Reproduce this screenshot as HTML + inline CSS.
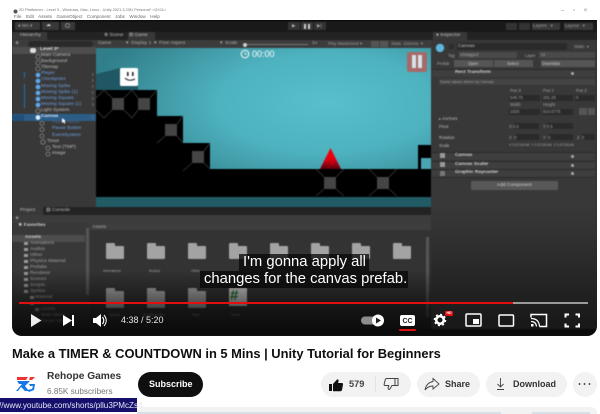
<!DOCTYPE html>
<html><head><meta charset="utf-8"><style>
html,body{margin:0;padding:0;background:#fff}
body{width:600px;height:414px;position:relative;overflow:hidden;font-family:"Liberation Sans",sans-serif}
.a,.t{position:absolute}
.t{white-space:nowrap;line-height:1}
#v{position:absolute;left:12px;top:20px;width:585px;height:316px;background:#282828;overflow:hidden;border-radius:0 0 10px 10px}
#v .u{filter:blur(.45px)}
.h{font-size:4.9px;color:#bdbdbd}
.b{color:#6f9fe0}
.i{font-size:4.2px;color:#a0a0a0}
.s{font-size:4.9px;color:#a0a0a0}
.n{font-size:4.9px;color:#ccc;font-weight:bold}
.f{position:absolute;width:18px;height:13px;background:#a3a3a3;border-radius:1px}
.f:before{content:"";position:absolute;left:0;top:-3px;width:9px;height:4px;background:#a3a3a3;border-radius:1px 1px 0 0}
.fd{position:absolute;width:4px;height:3px;background:#9a9a9a}
.box{position:absolute;background:#2a2a2a;height:6px}
.pill{position:absolute;background:#f2f2f2;border-radius:13px;height:25px;top:372px}
.cap{position:absolute;background:rgba(8,8,8,.76);color:#fff;font-size:14.8px;white-space:nowrap;box-sizing:border-box;padding-left:4px}
.btn{position:absolute;font-size:9px;font-weight:bold;color:#333;white-space:nowrap;line-height:1}
</style></head><body>

<div class="t" style="left:19px;top:8px;font-size:3.9px;color:#777">2D Platformer - Level 3 - Windows, Mac, Linux - Unity 2021.3.23f1 Personal* &lt;DX11&gt;</div>
<div class="t" style="left:14px;top:15px;font-size:4.6px;color:#666;word-spacing:1px">File&nbsp; Edit&nbsp; Assets&nbsp; GameObject&nbsp; Component&nbsp; Jobs&nbsp; Window&nbsp; Help</div>
<svg class="a" style="left:12px;top:9px" width="7" height="6"><circle cx="3.500" cy="2.500" r="2" fill="#555"/></svg>
<div class="t" style="left:561px;top:8px;font-size:6px;color:#888;word-spacing:7px">– ▫ ×</div>

<div id="v"><div class="u">
<!-- toolbar -->
<div class="a" style="left:0;top:0;width:585px;height:12px;background:#191919;border-top:1px solid #000;box-sizing:border-box"></div>
<div class="a" style="left:3px;top:2px;width:25px;height:8px;background:#383838;border-radius:1px"></div>
<div class="t" style="left:6px;top:4px;font-size:4.600px;color:#aaa">● MA ▾</div>
<div class="a" style="left:30px;top:2px;width:17px;height:8px;background:#383838"></div>
<div class="t" style="left:34px;top:3px;font-size:5px;color:#ddd">☁</div>
<div class="a" style="left:49px;top:2px;width:14px;height:8px;background:#383838"></div>
<div class="a" style="left:53px;top:3px;width:5px;height:5px;border:1px solid #888;border-radius:50%;box-sizing:border-box"></div>
<div class="a" style="left:276px;top:2px;width:12px;height:8px;background:#333"></div>
<div class="a" style="left:289px;top:2px;width:12px;height:8px;background:#383838"></div>
<div class="a" style="left:302px;top:2px;width:12px;height:8px;background:#333"></div>
<div class="t" style="left:280px;top:4px;font-size:4.500px;color:#bbb">▶</div>
<div class="a" style="left:292px;top:4px;width:2px;height:5px;background:#ccc"></div><div class="a" style="left:296px;top:4px;width:2px;height:5px;background:#ccc"></div>
<div class="t" style="left:305px;top:4px;font-size:4.500px;color:#aaa">▶|</div>
<div class="a" style="left:494px;top:3px;width:11px;height:7px;background:#333"></div>
<div class="a" style="left:507px;top:3px;width:11px;height:7px;background:#333"></div>
<div class="a" style="left:520px;top:3px;width:28px;height:7px;background:#383838"></div>
<div class="t" style="left:521px;top:4px;font-size:4.600px;color:#999">Layers&nbsp;&nbsp;&nbsp;▾</div>
<div class="a" style="left:552px;top:3px;width:29px;height:7px;background:#383838"></div>
<div class="t" style="left:553px;top:4px;font-size:4.600px;color:#999">Layout&nbsp;&nbsp;&nbsp;▾</div>

<!-- hierarchy -->
<div class="a" style="left:0;top:12px;width:84px;height:175px;background:#383838"></div>
<div class="a" style="left:0;top:12px;width:84px;height:8px;background:#232323"></div>
<div class="a" style="left:0;top:12px;width:35px;height:8px;background:#383838"></div>
<div class="t h" style="left:8px;top:14px">Hierarchy</div>
<div class="a" style="left:0;top:20px;width:84px;height:8px;background:#3c3c3c"></div>
<div class="t" style="left:3px;top:20px;font-size:7px;color:#ccc">+</div>
<div class="a" style="left:16px;top:21px;width:65px;height:6px;background:#2a2a2a;border-radius:3px"></div>
<div class="a" style="left:0;top:27px;width:84px;height:7px;background:#4d4d4d"></div>
<div class="t h" style="left:28px;top:28px;font-weight:bold;color:#ddd">Level 3*</div>
<div class="a" style="left:18px;top:28px;width:6px;height:5px;background:#ddd;border-radius:2px"></div>
<div class="t h" style="left:29px;top:34px">Main Camera</div>
<div class="t h" style="left:29px;top:40px">Background</div>
<div class="t h" style="left:29px;top:46px">Tilemap</div>
<div class="t h b" style="left:29px;top:52px">Player</div>
<div class="t h b" style="left:29px;top:58px">Checkpoint</div>
<div class="t h b" style="left:29px;top:64.500px">Moving Spike</div>
<div class="t h b" style="left:29px;top:70.500px">Moving Spike (1)</div>
<div class="t h b" style="left:29px;top:76.500px">Moving Square</div>
<div class="t h b" style="left:29px;top:82.500px">Moving Square (1)</div>
<div class="t h" style="left:29px;top:88.500px">Light System</div>
<div class="a" style="left:0;top:94px;width:84px;height:7px;background:#2c5d87"></div>
<div class="t h" style="left:29px;top:95px;color:#cfe0f5;font-weight:bold">Canvas</div>
<div class="t h" style="left:40px;top:101px;color:#4e6a93">Pause Menu</div>
<div class="t h b" style="left:40px;top:107px">Pause Button</div>
<div class="t h b" style="left:40px;top:113.500px">EventSystem</div>
<div class="t h" style="left:35px;top:119.500px">Timer</div>
<div class="t h" style="left:40px;top:125.500px">Text (TMP)</div>
<div class="t h" style="left:40px;top:131.500px">Image</div>
<svg class="a" style="left:0;top:28px" width="84" height="112">
<g fill="none" stroke="#8a8a8a" stroke-width=".8"><circle cx="26" cy="8.700" r="2.200"/><circle cx="26" cy="14.700" r="2.200"/><circle cx="26" cy="20.700" r="2.200"/><circle cx="26" cy="63" r="2.200"/><circle cx="30" cy="75.500" r="2"/><circle cx="30" cy="81.500" r="2"/><circle cx="30" cy="88" r="2"/><circle cx="31" cy="94" r="2.200"/><circle cx="36" cy="100" r="2"/><circle cx="36" cy="106" r="2"/></g>
<g fill="#5da6e8"><circle cx="26" cy="27" r="2.400"/><circle cx="26" cy="33" r="2.400"/><circle cx="26" cy="39" r="2.400"/><circle cx="26" cy="45" r="2.400"/><circle cx="26" cy="51" r="2.400"/><circle cx="26" cy="57" r="2.400"/><circle cx="26" cy="69.500" r="2.400" fill="#d7ecff"/></g>
<g fill="#1f73b5"><rect x="12" y="24" width="1" height="6"/><rect x="12" y="36" width="1" height="6"/><rect x="12" y="42" width="1" height="6"/><rect x="12" y="48" width="1" height="6"/><rect x="12" y="54" width="1" height="6"/></g>
<g fill="none" stroke="#777" stroke-width=".6"><path d="M80 25l1.500 1.500-1.500 1.500M80 31l1.500 1.500-1.500 1.500M80 37l1.500 1.500-1.500 1.500M80 43l1.500 1.500-1.500 1.500M80 49l1.500 1.500-1.500 1.500M80 55l1.500 1.500-1.500 1.500M80 68l1.500 1.500-1.500 1.500"/></g></svg>
<div class="a" style="left:1px;top:95px;width:11px;height:6px;background:#1f4f7a"></div>
<svg class="a" style="left:49px;top:97px" width="6" height="8"><path d="M1 1v5l1.400-1.200 1 2 1-.5-1-2H5z" fill="#fff"/></svg>

<!-- scene tabs -->
<div class="a" style="left:84px;top:12px;width:335px;height:8px;background:#232323"></div>
<div class="a" style="left:116px;top:12px;width:27px;height:8px;background:#383838"></div>
<div class="t h" style="left:92px;top:14px">⊕ Scene</div>
<div class="t h" style="left:117px;top:14px">⊞ Game</div>
<div class="a" style="left:84px;top:20px;width:335px;height:8px;background:#3c3c3c"></div>
<div class="t h" style="left:86px;top:22px;color:#aaa">Game</div>
<div class="t h" style="left:114px;top:22px;color:#aaa">▾&nbsp; Display 1&nbsp; ▾&nbsp; Free Aspect</div>
<div class="t h" style="left:208px;top:22px;color:#aaa">▾&nbsp; Scale</div>
<div class="a" style="left:232px;top:24px;width:64px;height:1px;background:#777"></div>
<div class="a" style="left:231px;top:22.500px;width:4px;height:4px;background:#ccc;border-radius:50%"></div>
<div class="t h" style="left:300px;top:22px;color:#aaa">1x</div>
<div class="t h" style="left:316px;top:22px;color:#999;font-size:4.400px">Play Maximized ▾</div>
<div class="t h" style="left:379px;top:22px;color:#999;font-size:4.400px">Stats&nbsp; Gizmos&nbsp; ▾</div>
<div class="a" style="left:359px;top:21px;width:8px;height:6px;background:#555"></div>
<div class="a" style="left:368px;top:21px;width:8px;height:6px;background:#555"></div>

<!-- game view -->
<div class="a" style="left:84px;top:28px;width:335px;height:159px;background:radial-gradient(ellipse 240px 110px at 230px 55px,#58bfcb 0%,#4eb2bf 45%,#3b8f9b 80%,#2f7e8a 100%)"></div>
<svg class="a" style="left:84px;top:28px" width="335" height="159">
<path d="M0 26 L24 20 L24 42 L0 42Z" fill="#1f5864"/><path d="M24 38h18v4H24z" fill="#1f5864"/>
<path d="M0 42H61V68H87V95H114V121H335V149H0Z" fill="#000"/>
<path d="M322 97h13v24h-13z" fill="#000"/><path d="M325 110h10v11h-10z" fill="#4aa4b1"/>
<rect x="0" y="149" width="335" height="10" fill="#215c66"/>
<g fill="#454545"><rect x="16" y="50" width="12" height="12"/><rect x="42" y="50" width="12" height="12"/><rect x="69" y="76" width="12" height="12"/><rect x="96" y="103" width="12" height="12"/><rect x="228" y="129" width="12" height="12"/><rect x="281" y="129" width="12" height="12"/></g>
<g stroke="#3a3a3a" stroke-width=".8" fill="none"><path d="M0 50L8 42 16 50M28 50L36 42 42 50 M54 50L61 42M0 62L8 70L16 62M28 62L36 70L42 62M81 76L87 68M81 88L87 95M69 88L61 95M108 103L114 95M108 115L114 121M96 115L87 123M228 129L220 121M240 129L248 121M281 129L273 121M293 129L301 121M228 141L220 148M240 141L248 148M281 141L273 148M293 141L301 148"/></g>
<defs><linearGradient id="sp" x1="0" y1="0" x2="0" y2="1"><stop offset="0" stop-color="#f00"/><stop offset=".55" stop-color="#e00010"/><stop offset="1" stop-color="#5a0010"/></linearGradient></defs>
<path d="M234.500 100L224 121H245Z" fill="url(#sp)"/>
<rect x="24" y="20" width="18" height="18" rx="1.500" fill="#fff"/>
<rect x="31" y="24" width="1.600" height="4" fill="#222"/><rect x="36" y="24" width="1.600" height="4" fill="#222"/>
<path d="M29 30Q33 34 39 31" stroke="#222" stroke-width="1" fill="none"/>
<circle cx="149" cy="6" r="3.800" fill="none" stroke="#fff" stroke-width="1"/><path d="M149 4v2.200h2" stroke="#fff" stroke-width=".7" fill="none"/>
<rect x="311" y="4" width="20" height="20" rx="2" fill="#a56a68"/>
<rect x="316" y="7" width="4" height="13" fill="#d6e3e6"/><rect x="322" y="7" width="4" height="13" fill="#d6e3e6"/>
</svg>
<div class="t" style="left:240px;top:30px;font-size:9px;color:#fff">00:00</div>

<!-- inspector -->
<div class="a" style="left:419px;top:12px;width:166px;height:304px;background:#383838"></div>
<div class="a" style="left:419px;top:12px;width:166px;height:8px;background:#232323"></div>
<div class="a" style="left:421px;top:12px;width:34px;height:8px;background:#383838"></div>
<div class="t h" style="left:424px;top:14px">● Inspector</div>
<svg class="a" style="left:422px;top:22px" width="14" height="14"><circle cx="6" cy="6" r="4.200" fill="#5db7dc"/></svg>
<div class="a" style="left:437px;top:24px;width:5px;height:5px;background:#2c2c2c"></div>
<div class="a" style="left:445px;top:23px;width:110px;height:7px;background:#2a2a2a"></div>
<div class="t h" style="left:446px;top:24.500px">Canvas</div>
<div class="t i" style="left:562px;top:25px">Static&nbsp; ▾</div>
<div class="t i" style="left:436px;top:34px">Tag</div>
<div class="a" style="left:447px;top:32px;width:58px;height:6px;background:#4a4a4a"></div>
<div class="t i" style="left:448px;top:33px">Untagged</div>
<div class="t i" style="left:513px;top:34px">Layer</div>
<div class="a" style="left:527px;top:32px;width:56px;height:6px;background:#4a4a4a"></div>
<div class="t i" style="left:529px;top:33px">UI</div>
<div class="t i" style="left:425px;top:42px">Prefab</div>
<div class="a" style="left:442px;top:40px;width:39px;height:7px;background:#555"></div>
<div class="a" style="left:482px;top:40px;width:39px;height:7px;background:#555"></div>
<div class="a" style="left:529px;top:40px;width:54px;height:7px;background:#555"></div>
<div class="t i" style="left:456px;top:42px;color:#ccc">Open</div>
<div class="t i" style="left:495px;top:42px;color:#ccc">Select</div>
<div class="t i" style="left:530px;top:42px;color:#ccc">Overrides</div>
<div class="a" style="left:420px;top:49px;width:163px;height:8px;background:#3e3e3e;border-top:1px solid #2a2a2a;box-sizing:border-box"></div>
<div class="t n" style="left:443px;top:51px">Rect Transform</div>
<div class="a" style="left:427px;top:59px;width:156px;height:6px;background:#444"></div>
<div class="t i" style="left:428px;top:60px;font-size:3.900px">Some values driven by Canvas.</div>
<div class="t i" style="left:498px;top:69px">Pos X</div><div class="t i" style="left:531px;top:69px">Pos Y</div><div class="t i" style="left:564px;top:69px">Pos Z</div>
<div class="box" style="left:497px;top:75px;width:31px"></div><div class="box" style="left:530px;top:75px;width:31px"></div><div class="box" style="left:563px;top:75px;width:20px"></div>
<div class="t i" style="left:498px;top:76px">548.75</div><div class="t i" style="left:531px;top:76px">261.25</div><div class="t i" style="left:564px;top:76px">0</div>
<div class="t i" style="left:498px;top:83px">Width</div><div class="t i" style="left:531px;top:83px">Height</div>
<div class="box" style="left:497px;top:89px;width:31px"></div><div class="box" style="left:530px;top:89px;width:31px"></div>
<div class="t i" style="left:498px;top:90px">1920</div><div class="t i" style="left:531px;top:90px">914.0775</div>
<div class="a" style="left:576px;top:88px;width:7px;height:7px;background:#555"></div><div class="a" style="left:567px;top:88px;width:8px;height:7px;background:#555"></div>
<div class="t i" style="left:427px;top:97px;color:#bbb">▸ Anchors</div>
<div class="t i" style="left:427px;top:105px;color:#bbb">Pivot</div>
<div class="box" style="left:502px;top:103px;width:25px"></div><div class="box" style="left:535px;top:103px;width:26px"></div>
<div class="t i" style="left:497px;top:105px">X 0.5</div><div class="t i" style="left:531px;top:105px">Y 0.5</div>
<div class="t i" style="left:427px;top:116px;color:#bbb">Rotation</div>
<div class="box" style="left:503px;top:114px;width:24px"></div><div class="box" style="left:536px;top:114px;width:25px"></div><div class="box" style="left:570px;top:114px;width:13px"></div>
<div class="t i" style="left:497px;top:116px">X&nbsp; 0</div><div class="t i" style="left:531px;top:116px">Y&nbsp; 0</div><div class="t i" style="left:565px;top:116px">Z&nbsp; 0</div>
<div class="t i" style="left:427px;top:124px;color:#bbb">Scale</div>
<div class="t i" style="left:497px;top:124px;font-size:3.600px">X 0.5716146&nbsp; Y 0.5716146&nbsp; Z 0.5716146</div>
<div class="a" style="left:420px;top:132px;width:163px;height:8px;background:#3e3e3e;border-top:1px solid #2a2a2a;box-sizing:border-box"></div>
<div class="a" style="left:420px;top:141px;width:163px;height:8px;background:#3e3e3e;border-top:1px solid #2a2a2a;box-sizing:border-box"></div>
<div class="a" style="left:420px;top:149px;width:163px;height:9px;background:#3e3e3e;border-top:1px solid #2a2a2a;border-bottom:1px solid #2a2a2a;box-sizing:border-box"></div>
<div class="t n" style="left:443px;top:134px">Canvas</div>
<div class="t n" style="left:443px;top:143px">Canvas Scaler</div>
<div class="t n" style="left:443px;top:151px">Graphic Raycaster</div>
<div class="a" style="left:428px;top:133px;width:5px;height:5px;background:#999"></div><div class="a" style="left:428px;top:142px;width:5px;height:5px;background:#999"></div><div class="a" style="left:428px;top:151px;width:5px;height:5px;background:#777"></div>
<div class="a" style="left:559px;top:52px;width:3px;height:3px;border-radius:50%;background:#aaa"></div><div class="a" style="left:559px;top:135px;width:3px;height:3px;border-radius:50%;background:#aaa"></div><div class="a" style="left:559px;top:144px;width:3px;height:3px;border-radius:50%;background:#aaa"></div><div class="a" style="left:559px;top:152px;width:3px;height:3px;border-radius:50%;background:#aaa"></div>
<div class="a" style="left:459px;top:161px;width:87px;height:9px;background:#585858;border-radius:1px"></div>
<div class="t" style="left:485px;top:163.500px;font-size:4.800px;color:#ccc">Add Component</div>

<!-- project -->
<div class="a" style="left:0;top:187px;width:419px;height:129px;background:#383838"></div>
<div class="a" style="left:0;top:187px;width:419px;height:8px;background:#232323"></div>
<div class="a" style="left:0;top:187px;width:31px;height:8px;background:#383838"></div>
<div class="t h" style="left:8px;top:189px">Project</div><div class="t h" style="left:34px;top:189px">▤ Console</div>
<div class="a" style="left:0;top:195px;width:419px;height:8px;background:#3c3c3c"></div>
<div class="t" style="left:3px;top:195px;font-size:7px;color:#ccc">+</div>
<div class="t h" style="left:2px;top:204px;font-weight:bold;color:#ccc;left:6px">★ Favorites</div>
<div class="a" style="left:0;top:215px;width:73px;height:7px;background:#4d4d4d"></div>
<div class="t h" style="left:13px;top:216px;color:#ccc;font-weight:bold">Assets</div>
<div class="t s" style="left:18px;top:221.500px">Animations</div>
<div class="t s" style="left:18px;top:227.500px">Audios</div>
<div class="t s" style="left:18px;top:233.500px">Other</div>
<div class="t s" style="left:18px;top:239.500px">Physics Material</div>
<div class="t s" style="left:18px;top:245.500px">Prefabs</div>
<div class="t s" style="left:18px;top:251.500px">Renderer</div>
<div class="t s" style="left:18px;top:257.500px">Scenes</div>
<div class="t s" style="left:18px;top:263.500px">Scripts</div>
<div class="t s" style="left:18px;top:269.500px">Sprites</div>
<div class="t s" style="left:23px;top:275.500px">Material</div>
<div class="t s" style="left:23px;top:282px">UI</div>
<div class="t s" style="left:29px;top:288px">Levels</div>
<div class="t s" style="left:29px;top:294px">Main Menu</div>
<div class="t s" style="left:29px;top:300px">Pause Menu</div>
<div class="fd" style="left:12px;top:222px"></div><div class="fd" style="left:12px;top:228px"></div><div class="fd" style="left:12px;top:234px"></div><div class="fd" style="left:12px;top:240px"></div><div class="fd" style="left:12px;top:246px"></div><div class="fd" style="left:12px;top:252px"></div><div class="fd" style="left:12px;top:258px"></div><div class="fd" style="left:12px;top:264px"></div><div class="fd" style="left:12px;top:270px"></div><div class="fd" style="left:18px;top:276px"></div><div class="fd" style="left:18px;top:282px"></div><div class="fd" style="left:23px;top:288px"></div>
<div class="a" style="left:78px;top:203px;width:341px;height:113px;background:#333"></div>
<div class="a" style="left:78px;top:203px;width:341px;height:7px;background:#3e3e3e"></div>
<div class="t i" style="left:80.500px;top:204.500px;color:#aaa;font-size:4.600px">Assets</div>
<div class="a" style="left:74px;top:208px;width:3px;height:67px;background:#555"></div>
<div class="a" style="left:414px;top:217px;width:3px;height:80px;background:#555"></div>
<div class="f" style="left:94px;top:226px"></div><div class="f" style="left:135px;top:226px"></div><div class="f" style="left:176px;top:226px"></div><div class="f" style="left:217px;top:226px"></div><div class="f" style="left:258px;top:226px"></div><div class="f" style="left:299px;top:226px"></div><div class="f" style="left:340px;top:226px"></div><div class="f" style="left:381px;top:226px"></div>
<div class="f" style="left:94px;top:271px;height:17px"></div><div class="f" style="left:135px;top:271px;height:17px"></div><div class="f" style="left:176px;top:271px;height:17px"></div>
<div class="t i" style="left:91px;top:250px;font-size:3.600px">Animations</div><div class="t i" style="left:137px;top:250px;font-size:3.600px">Audios</div><div class="t i" style="left:179px;top:250px;font-size:3.600px">Other</div>
<div class="t i" style="left:97px;top:294px;font-size:3.600px">Sprites</div><div class="t i" style="left:131px;top:294px;font-size:3.600px">TextMesh Pro</div><div class="t i" style="left:180px;top:294px;font-size:3.600px">Files</div><div class="t i" style="left:219px;top:294px;font-size:3.600px">Timer</div>
<div class="a" style="left:217px;top:268px;width:18px;height:18px;background:#c5c5c5"></div>
<div class="t" style="left:218px;top:268px;font-size:15px;font-weight:bold;color:#1d6b2d">#</div>
<div class="a" style="left:0;top:250px;width:585px;height:66px;background:linear-gradient(rgba(0,0,0,0),rgba(0,0,0,.6) 60%,rgba(0,0,0,.82))"></div>
<div class="a" style="left:0;top:309px;width:585px;height:7px;background:#0b0b0b"></div>
<div class="a" style="left:419px;top:187px;width:166px;height:122px;background:linear-gradient(#383838,#2c2c2c 40%,#191919 95%)"></div>
</div>

<!-- captions -->
<div class="cap" style="left:227px;top:234px;width:130px;height:16.500px;line-height:16px">I'm gonna apply all</div>
<div class="cap" style="left:188px;top:250.500px;width:208px;height:17px;line-height:17px">changes for the canvas prefab.</div>

<!-- progress -->
<div class="a" style="left:7px;top:281.500px;width:494px;height:2.500px;background:#e30e0e"></div>
<div class="a" style="left:501px;top:281.500px;width:75px;height:2.500px;background:#9a9a9a"></div>

<!-- controls -->
<svg class="a" style="left:0;top:285px" width="585" height="30" fill="#fff">
<path d="M19 9L29.500 15.500 19 22Z" fill="#eee"/>
<path d="M51 10L60 15.500 51 21ZM60 10H62V21H60Z"/>
<path d="M81 13h3l5-4v13l-5-4h-3Z"/><path d="M90.500 12Q93 15.500 90.500 19" stroke="#fff" stroke-width="1.200" fill="none"/><path d="M92 10Q96.500 15.500 92 21" stroke="#fff" stroke-width="1" fill="none"/>
<rect x="349" y="11.500" width="20" height="8" rx="4" fill="#8c8c8c"/><circle cx="366" cy="15.500" r="6" fill="#fff"/><path d="M364 12.500l5 3-5 3Z" fill="#222"/>
<rect x="388" y="10" width="15" height="11" rx="2"/><text x="395.500" y="18" font-size="7" font-weight="bold" fill="#222" text-anchor="middle" font-family="Liberation Sans">CC</text>
<rect x="387" y="24" width="17" height="2" rx="1" fill="#e30e0e"/>
<circle cx="428" cy="15" r="3.800" fill="none" stroke="#fff" stroke-width="2.600"/><circle cx="428" cy="15" r="5.500" fill="none" stroke="#fff" stroke-width="1.600" stroke-dasharray="2 2.300"/>
<rect x="433" y="6" width="8" height="5" rx="1" fill="#e30e0e"/>
<rect x="454" y="9" width="15" height="12" rx="1" fill="none" stroke="#fff" stroke-width="1.500"/><rect x="461" y="14" width="6" height="5"/>
<rect x="487" y="10" width="14.500" height="11" rx="1" fill="none" stroke="#fff" stroke-width="1.500"/>
<path d="M519 12.500V9.500h15.500v12h-7" fill="none" stroke="#fff" stroke-width="1.500"/><path d="M519 16.500q5 0 5.500 5M519 13.500q8 0 8.500 8" fill="none" stroke="#fff" stroke-width="1.200"/><path d="M519 19h2.500v2.500h-2.500z"/>
<path d="M553.500 12.500V9.500h3.500M563.500 9.500h3.500V12.500M567 18.500v3h-3.500M557 21.500h-3.500V18.500" fill="none" stroke="#fff" stroke-width="2"/>
</svg>
<div class="t" style="left:109px;top:295.500px;font-size:9px;color:#e6e6e6">4:38 / 5:20</div>
<div class="t" style="left:434.500px;top:291.500px;font-size:3.500px;color:#fff;font-weight:bold">HD</div>
</div>

<!-- title -->
<div class="t" style="left:12px;top:348px;font-size:12.900px;font-weight:bold;color:#0f0f0f">Make a TIMER &amp; COUNTDOWN in 5 Mins | Unity Tutorial for Beginners</div>

<!-- channel -->
<svg class="a" style="left:15px;top:375px" width="21" height="20"><path d="M2 2h11l-2 3H2zM15 2h5l-3 3h-3z" fill="#e33"/><path d="M2 6h13l-5 5 4 5h-4l-4-4-3 4H1l6-7H4zM14 9h6l-1 6-5 2-2-2 5-1 1-3h-3z" fill="#1778e8"/></svg>
<div class="t" style="left:47px;top:372px;font-size:10.200px;font-weight:bold;color:#333">Rehope Games</div>
<div class="t" style="left:47px;top:388px;font-size:8.200px;color:#777">6.85K subscribers</div>
<div class="a" style="left:138px;top:372px;width:65px;height:25px;background:#0f0f0f;border-radius:13px"></div>
<div class="t" style="left:149px;top:379.500px;font-size:9px;font-weight:bold;color:#fff">Subscribe</div>

<div class="pill" style="left:321px;width:90px"></div>
<div class="pill" style="left:417px;width:63px"></div>
<div class="pill" style="left:486px;width:81px"></div>
<div class="pill" style="left:573px;width:24px;border-radius:50%"></div>
<div class="a" style="left:375px;top:376px;width:1px;height:16px;background:#e2e2e2"></div>
<svg class="a" style="left:321px;top:372px" width="276" height="24">
<path d="M8 12h3v7H8zM12 12l4-4.500q2-.5 1.500 2L17 11h4q1.200 0 1 1.500l-1 5.500q-.3 1.200-1.500 1.200H12z" fill="#111"/>
<path d="M66 6.500h8v7h-3l-2.500 4q-1.800 0-1.300-2l.5-2H64q-.9 0-.9-1l1.200-5q.3-1 1.700-1zM74 6.500h3v7h-3" fill="none" stroke="#444" stroke-width="1"/>
<path d="M112 6.500l6 5.500-6 5v-3q-5 0-8 4 1-7 8-8.500z" fill="none" stroke="#444" stroke-width=".9"/>
<path d="M179.500 6v9M176.500 12l3 3 3-3M176 17.500h7" fill="none" stroke="#444" stroke-width=".9"/>
<circle cx="258.500" cy="12" r=".9" fill="#222"/><circle cx="263.500" cy="12" r=".9" fill="#222"/><circle cx="268.500" cy="12" r=".9" fill="#222"/>
</svg>
<div class="t" style="left:349px;top:379.500px;font-size:9.200px;font-weight:bold;color:#444">579</div>
<div class="btn" style="left:445px;top:379.500px">Share</div>
<div class="btn" style="left:513px;top:379.500px">Download</div>

<!-- status & bottom -->
<div class="a" style="left:137px;top:407px;width:460px;height:7px;background:#f2f2f2;border-radius:6px 6px 0 0"></div>
<div class="a" style="left:137px;top:412px;width:364px;height:2px;background:#d6e0e6"></div>
<div class="a" style="left:532px;top:412px;width:58px;height:2px;background:#d6e0e6"></div>
<div class="a" style="left:0;top:398px;width:137px;height:14px;background:#14106b"></div>
<div class="t" style="left:-1px;top:401.500px;font-size:8.100px;color:#e6e6f5">//www.youtube.com/shorts/pllu3PMcZs4</div>
</body></html>
